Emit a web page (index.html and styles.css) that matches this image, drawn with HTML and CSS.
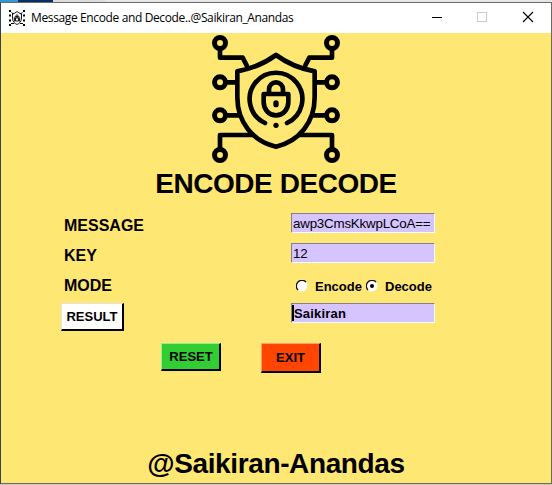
FILE: index.html
```html
<!DOCTYPE html>
<html lang="en">
<head>
<meta charset="utf-8">
<title>Message Encode and Decode</title>
<link rel="stylesheet" href="styles.css">
</head>
<body>
<div class="backdrop"><i class="sky"></i><i class="navy"></i><i class="pale"></i><i class="rest"></i></div>
<div class="window">
  <header class="titlebar">
    <svg class="app-icon" width="16" height="16" viewBox="0 0 16 16" fill="none" stroke="#000">
      <path d="M0 1h2M14 1h2M0 5.500h2M14 5.500h2M0 10.500h2M14 10.500h2M0 15h2M14 15h2" stroke-width="2"/>
      <path d="M2.500 2.500L4.500 4M13.500 2.500L11.500 4M2 13.500h3M11 13.500h3"/>
      <path d="M8 1.500Q6 3.500 3.500 3.800V8C3.500 11.500 5.500 13.500 8 14.500C10.500 13.500 12.500 11.500 12.500 8V3.800Q10 3.500 8 1.500Z" stroke-width=".9"/>
      <path d="M5.500 11.500Q4 7 8 4.500Q12 7 10.500 11.500M6.500 8h3v3h-3zM7 8V6.500h2V8" stroke-width=".9"/>
    </svg>
    <span class="title">Message Encode and Decode..@Saikiran_Anandas</span>
    <svg class="controls" width="120" height="30" viewBox="0 0 120 30" fill="none" shape-rendering="crispEdges">
      <path d="M0 14.500h10" stroke="#000"/>
      <rect x="45.500" y="9.500" width="9" height="9" stroke="#ccc"/>
      <path d="M91 9l10 10M101 9l-10 10" stroke="#000" stroke-width="1.1" shape-rendering="auto"/>
    </svg>
  </header>
  <main class="content">
    <svg class="logo" viewBox="33 9 390 396">
      <g fill="none" stroke="#000" stroke-width="14" stroke-linecap="round" stroke-linejoin="round">
        <g id="half">
          <circle cx="60" cy="39" r="16.500" stroke-width="15"/><circle cx="60" cy="157" r="16.500" stroke-width="15"/>
          <circle cx="60" cy="256" r="16.500" stroke-width="15"/><circle cx="60" cy="375" r="16.500" stroke-width="15"/>
          <path d="M60 58V83H128L140 106M80 157H110M80 256H116M60 354V315H156"/>
        </g>
        <use href="#half" transform="matrix(-1 0 0 1 456 0)"/>
        <path d="M228 75Q178 112 112 124V202C112 276 158 334 228 350C298 334 344 276 344 202V124Q278 112 228 75Z"/>
        <path d="M195 279A79 79 0 1 1 261 279"/>
        <path d="M191 192H265V217A37 39 0 0 1 191 217ZM207 190V178A21 21 0 0 1 249 178V190"/>
        <path d="M228 219V224" stroke-width="16"/>
        <path d="M228 286V286.100" stroke-width="16"/>
      </g>
    </svg>
    <h1 class="heading">ENCODE DECODE</h1>
    <form class="form">
      <label class="label message">MESSAGE</label><div class="field">awp3CmsKkwpLCoA==</div>
      <label class="label key">KEY</label><div class="field">12</div>
      <label class="label mode">MODE</label>
      <div class="modes">
        <svg class="radio" viewBox="0 0 12 12"><circle cx="6" cy="6" r="5.500" fill="#fff"/><path d="M2 10A5.300 5.300 0 0 1 10 2" fill="none" stroke="#111" stroke-width="1.300"/></svg>
        <span class="encode">Encode</span>
        <svg class="radio" viewBox="0 0 12 12"><circle cx="6" cy="6" r="5.500" fill="#fff"/><path d="M2 10A5.300 5.300 0 0 1 10 2" fill="none" stroke="#111" stroke-width="1.300"/><circle cx="6" cy="6" r="2" fill="#000"/></svg>
        <span class="decode">Decode</span>
      </div>
      <button type="button" class="button result">RESULT</button><div class="field output"><i class="caret"></i><span>Saikiran</span></div>
    </form>
    <div class="actions">
      <button type="button" class="button reset">RESET</button>
      <button type="button" class="button exit">EXIT</button>
    </div>
    <footer class="credit">@Saikiran-Anandas</footer>
  </main>
</div>
</body>
</html>
```
FILE: styles.css
```css
* { box-sizing: border-box; }
body {
  margin: 0;
  width: 552px;
  height: 485px;
  overflow: hidden;
  background: #c8c8bc;
  font-family: "Liberation Sans", Arial, sans-serif;
  color: #000;
}
.backdrop { display: flex; height: 2px; }
.sky { width: 18px; background: #2f9bd8; }
.navy { width: 35px; background: #06305f; }
.pale { width: 52px; background: #dcdcdc; }
.rest { flex: 1; background: #e6e6e6; }
.window {
  height: 482px;
  border: 1px solid #6b6b66;
  border-left-color: #344052;
}
.titlebar {
  display: flex;
  align-items: center;
  height: 30px;
  background: #fff;
}
.app-icon { flex: none; margin-left: 8px; }
.title {
  flex: none;
  width: 401px;
  margin-left: 5px;
  padding-left: 1px;
  font: 12px/16px "Open Sans", "Noto Sans", sans-serif;
  letter-spacing: -0.37px;
  white-space: nowrap;
}
.controls { flex: none; margin-left: 1px; }
.content {
  display: flex;
  flex-direction: column;
  height: 450px;
  background: #ffe773;
}
.logo { flex: none; width: 130px; height: 132px; margin-left: 210px; }
.heading {
  flex: none;
  margin: 3px 0 0;
  height: 31px;
  font-size: 28px;
  line-height: 32px;
  letter-spacing: -0.45px;
  text-align: center;
}
.form {
  display: grid;
  grid-template-columns: 230px 160px;
  grid-template-rows: 30px 30px 30px 30px;
  align-items: start;
  margin: 14px 0 0 60px;
}
.label {
  padding: 4px 0 0 3px;
  font-size: 16px;
  line-height: 18px;
  font-weight: bold;
}
.field {
  display: flex;
  width: 144px;
  height: 20px;
  padding-left: 1px;
  border: 1px solid #fff;
  border-top-color: #84808f;
  border-left-color: #84808f;
  background: #d5c4ff;
  font-size: 13.333px;
  line-height: 19px;
  letter-spacing: -0.2px;
  white-space: nowrap;
}
.output { padding: 0; font-size: 13px; font-weight: bold; letter-spacing: 0.2px; }
.caret { width: 2px; height: 16px; margin-top: 1px; background: #000; }
.modes {
  display: flex;
  align-items: center;
  height: 18px;
  margin-top: 4px;
  padding-left: 5px;
  font-size: 13px;
  font-weight: bold;
}
.radio { flex: none; width: 12px; height: 12px; }
.encode { box-sizing: content-box; width: 51px; padding-left: 7px; }
.decode { padding-left: 7px; }
.button {
  padding: 0;
  border: 1px solid #e3e3e3;
  border-right: 2px solid #000;
  border-bottom: 2px solid #000;
  font: bold 13px/16px "Liberation Sans", Arial, sans-serif;
  color: #000;
}
.result { width: 63px; height: 28px; background: #fff; padding-top: 1px; }
.actions { display: flex; gap: 40px; margin: 10px 0 0 160px; }
.reset { width: 60px; height: 28px; padding: 1px 0 0 1px; background: #32cd32; border-top-color: #90f09a; border-left-color: #90f09a; }
.exit { width: 60px; height: 30px; padding-top: 1px; background: #ff4500; border-top-color: #ff9a73; border-left-color: #ff9a73; }
.credit {
  margin-top: auto;
  height: 35px;
  font-size: 28px;
  line-height: 32px;
  letter-spacing: -0.38px;
  font-weight: bold;
  text-align: center;
}
```
